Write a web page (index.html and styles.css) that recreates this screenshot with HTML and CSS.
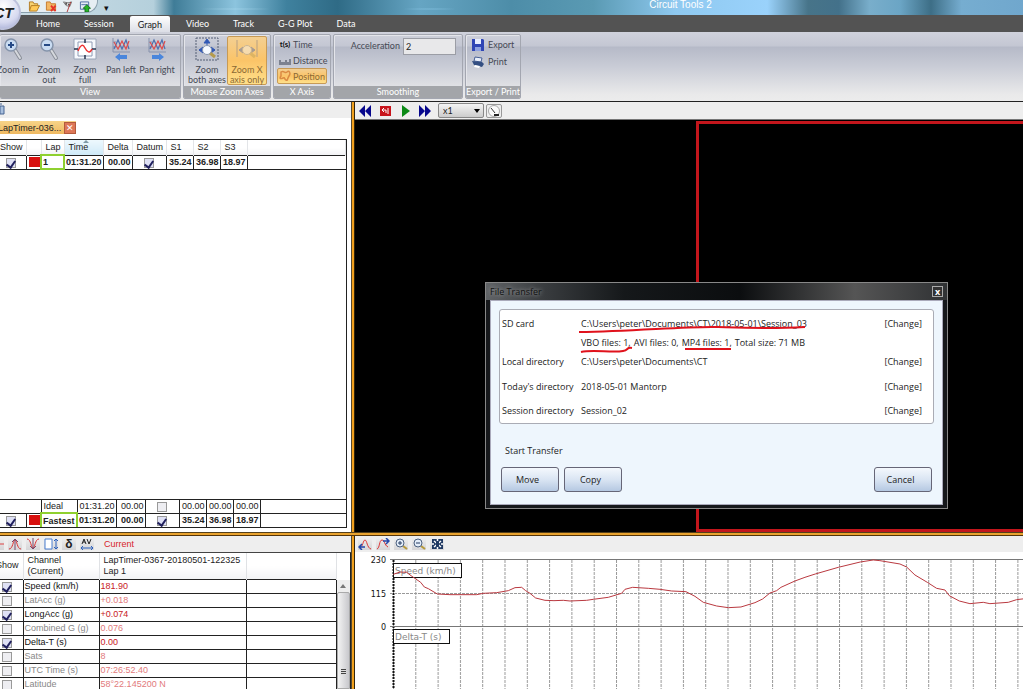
FILE: index.html
```html
<!DOCTYPE html>
<html lang="en">
<head>
    <meta charset="UTF-8">
    <meta name="viewport" content="width=device-width, initial-scale=1.0">
    <title>Circuit Tools 2</title>
    <link rel="stylesheet" href="styles.css">
</head>
<body>
    <!-- Shared icons -->
    <svg class="defs" aria-hidden="true">
        <symbol id="lens" viewBox="0 0 24 24">
            <path d="M14 13l5 8" stroke="#8a8f99" stroke-width="4" stroke-linecap="round"/>
            <path d="M14 13l5 8" stroke="#d5d8dd" stroke-width="2" stroke-linecap="round"/>
            <circle cx="10" cy="8" r="6" fill="#c9dcf2" stroke="#8493aa" stroke-width="1.5"/>
        </symbol>
        <symbol id="waves" viewBox="0 0 24 24">
            <path d="M4 1v14h17M4 5h3M4 10h3" fill="none" stroke="#8792ad"/>
            <path d="M5 12l4-9 4 9 4-9 3 9" fill="none" stroke="#4c6fae" stroke-width="1.2"/>
            <path d="M5 5l4 7 4-8 4 8 3-8" fill="none" stroke="#df4b4b" stroke-width="1.2"/>
        </symbol>
        <symbol id="axes" viewBox="0 0 24 24">
            <path d="M4 13h16M4 13l4-3v6zM20 13l-4-3v6z" fill="#3158b5" stroke="#3158b5"/>
            <path d="M15 16l5 4" stroke="#b59b4d" stroke-width="3"/>
            <circle cx="12" cy="13" r="4.5" fill="#f5f9ff" stroke="#8b98b0"/>
        </symbol>
    </svg>

    <header class="titlebar">
        <div class="quick">
            <button aria-label="Open"><svg viewBox="0 0 12 12"><path d="M1 10V1h4l1 2h4v2" fill="#f7d271" stroke="#b07a20"/><path d="M1 11l2-6h9l-3 6z" fill="#ffc956" stroke="#b07a20"/></svg></button>
            <button aria-label="Close file"><svg viewBox="0 0 12 12"><path d="M1 10V1h4l1 2h5v7z" fill="#f3b763" stroke="#c5772b"/><path d="M6 5l5 6M11 5l-5 6" stroke="#e5342a" stroke-width="2"/></svg></button>
            <button aria-label="Flag"><svg viewBox="0 0 12 12"><path d="M1 1l5 1 4-1-2 5-4-1z" fill="#eee" stroke="#777"/><path d="M3 2h2v2H3zM6 3h2v2H6z" fill="#555"/><path d="M9 1L5 12" stroke="#a33"/></svg></button>
            <button aria-label="Import"><svg viewBox="0 0 12 12"><path d="M1 1h9v8H1z" fill="#e4ebf5" stroke="#4968a0"/><path d="M2 4h7" stroke="#4968a0"/><path d="M8 4l4 4h-2v4H6V8H4z" fill="#26b526" stroke="#14701c"/></svg></button>
        </div>
        <button class="quick-more" aria-label="Customize">▾</button>
        <span class="app-title">Circuit Tools 2</span>
        <button class="orb">CT</button>
    </header>

    <nav class="tabs">
        <button>Home</button>
        <button>Session</button>
        <button class="active">Graph</button>
        <button>Video</button>
        <button>Track</button>
        <button>G-G Plot</button>
        <button>Data</button>
    </nav>

    <section class="ribbon">
        <div class="group view">
            <div class="tools">
                <button class="big"><svg viewBox="0 0 24 24"><use href="#lens"/><path d="M7 8h6M10 5v6" stroke="#254a86" stroke-width="2"/></svg>Zoom in</button>
                <button class="big"><svg viewBox="0 0 24 24"><use href="#lens"/><path d="M7 8h6" stroke="#254a86" stroke-width="2"/></svg>Zoom<br>out</button>
                <button class="big"><svg viewBox="0 0 24 24"><path d="M1 2h22v20H1z" fill="#f7f9fd" stroke="#9aa5b8"/><path d="M5 5h14v14H5z" fill="#fff" stroke="#8d9ab4"/><path d="M12 2v4M12 18v4M1 12h4M19 12h4" stroke="#26334c" stroke-width="1.500"/><path d="M5 14c3-7 5-7 7-3s5 6 7 1" fill="none" stroke="#e33" stroke-width="1.500"/></svg>Zoom<br>full</button>
                <button class="big"><svg viewBox="0 0 24 24"><use href="#waves"/><path d="M6 20l5-4v2h7v4h-7v2z" fill="#4a86dc"/></svg>Pan left</button>
                <button class="big"><svg viewBox="0 0 24 24"><use href="#waves"/><path d="M19 20l-5-4v2H7v4h7v2z" fill="#4a86dc"/></svg>Pan right</button>
            </div>
            <div class="caption">View</div>
        </div>
        <div class="group mouse">
            <div class="tools">
                <button class="big"><svg viewBox="0 0 24 24"><path d="M1 1h22v22H1z" fill="none" stroke="#555f75" stroke-dasharray="2 1"/><path d="M12 10V3M9 6l3-4 3 4z" fill="#3158b5" stroke="#3158b5"/><use href="#axes"/></svg>Zoom<br>both axes</button>
                <button class="big selected"><svg viewBox="0 0 24 24"><path d="M2 3v17M22 3v17" stroke="#b8a081"/><use href="#axes" opacity=".4"/></svg>Zoom X<br>axis only</button>
            </div>
            <div class="caption">Mouse Zoom Axes</div>
        </div>
        <div class="group xaxis">
            <div class="tools">
                <button class="small"><b>t(s)</b>Time</button>
                <button class="small"><svg viewBox="0 0 12 12"><path d="M1 6v5M3 8v3M5 8v3M7 6v5M9 8v3M11 5v6" stroke="#333a4c"/></svg>Distance</button>
                <button class="small selected"><svg viewBox="0 0 12 12"><path d="M2 2c3-2 4 2 6 0s4 1 2 4-1 5-3 4-1-3-3-2-4 1-2-2z" fill="none" stroke="#db8b43" stroke-width="1.500"/></svg>Position</button>
            </div>
            <div class="caption">X Axis</div>
        </div>
        <div class="group smoothing">
            <div class="tools">
                <label for="acceleration">Acceleration</label>
                <input type="text" id="acceleration" value="2">
            </div>
            <div class="caption">Smoothing</div>
        </div>
        <div class="group export">
            <div class="tools">
                <button class="small"><svg viewBox="0 0 12 12"><path d="M0 0h11l1 1v11H0z" fill="#3046b5"/><path d="M3 0h6v5H3z" fill="#e8eeff"/><path d="M3 8h6v4H3z" fill="#8fa2e0"/></svg>Export</button>
                <button class="small"><svg viewBox="0 0 12 12"><path d="M3 1l7 1-1 4-7-1z" fill="#eaf0fb" stroke="#486096"/><path d="M0 5l10 1 2 2-2 3-8-2z" fill="#344f82"/><path d="M3 9l5 1-1 2-5-1z" fill="#fff"/></svg>Print</button>
            </div>
            <div class="caption">Export / Print</div>
        </div>
    </section>

    <main class="workspace">
        <!-- Laps -->
        <section class="panel laps">
            <div class="laps-bar"><svg viewBox="0 0 6 12"><path d="M0 3h4v8H0z" fill="#a9c0de" stroke="#466492"/><path d="M0 1h2" stroke="#466492"/></svg></div>
            <div class="file-tabs">
                <div class="file-tab">LapTimer-036...<button aria-label="Close">✕</button></div>
            </div>
            <div class="lap-box">
                <table class="lap-table">
                    <colgroup><col class="w-show"><col class="w-color"><col class="w-lap"><col class="w-time"><col class="w-delta"><col class="w-datum"><col class="w-s"><col class="w-s"><col class="w-s"><col></colgroup>
                    <thead>
                        <tr><th>Show</th><th></th><th>Lap</th><th class="sorted">Time</th><th>Delta</th><th>Datum</th><th>S1</th><th>S2</th><th>S3</th><th></th></tr>
                    </thead>
                    <tbody>
                        <tr class="bold"><td class="check"><input type="checkbox" aria-label="Show lap 1" checked></td><td><i class="swatch"></i></td><td class="marked">1</td><td class="num">01:31.20</td><td class="num">00.00</td><td class="check"><input type="checkbox" aria-label="Datum lap 1" checked></td><td class="num">35.24</td><td class="num">36.98</td><td class="num">18.97</td><td></td></tr>
                    </tbody>
                </table>
                <table class="lap-table totals">
                    <colgroup><col class="w-show"><col class="w-color"><col class="w-name"><col class="w-time"><col class="w-delta"><col class="w-datum"><col class="w-s"><col class="w-s"><col class="w-s"><col></colgroup>
                    <tbody>
                        <tr><td class="blank"></td><td class="blank"></td><td>Ideal</td><td class="num">01:31.20</td><td class="num">00.00</td><td class="check"><input type="checkbox" aria-label="Datum ideal"></td><td class="num">00.00</td><td class="num">00.00</td><td class="num">00.00</td><td></td></tr>
                        <tr class="bold"><td class="check"><input type="checkbox" aria-label="Show fastest" checked></td><td><i class="swatch"></i></td><td class="marked">Fastest</td><td class="num">01:31.20</td><td class="num">00.00</td><td class="check"><input type="checkbox" aria-label="Datum fastest" checked></td><td class="num">35.24</td><td class="num">36.98</td><td class="num">18.97</td><td></td></tr>
                    </tbody>
                </table>
            </div>
        </section>

        <div class="split-v"></div>

        <!-- Video -->
        <section class="panel video">
            <div class="video-bar">
                <button aria-label="Rewind"><svg viewBox="0 0 14 12"><path d="M7 0v12L1 6zM13 0v12L7 6z" fill="#07078c"/></svg></button>
                <button aria-label="Restart lap"><svg viewBox="0 0 14 12"><path d="M2 1h11v10H2z" fill="#c8141b"/><path d="M4 5h4v3M6 3L4 5l2 2M10 3v6" fill="none" stroke="#fff"/></svg></button>
                <button aria-label="Play"><svg viewBox="0 0 14 12"><path d="M4 0l8 6-8 6z" fill="#0b8a16"/></svg></button>
                <button aria-label="Forward"><svg viewBox="0 0 14 12"><path d="M1 0v12l6-6zM7 0v12l6-6z" fill="#07078c"/></svg></button>
                <select aria-label="Speed"><option>x1</option></select>
                <button class="gauge" aria-label="Gauges"><svg viewBox="0 0 14 12"><circle cx="7" cy="6" r="5.500" fill="#fafafa" stroke="#aaa"/><path d="M4 3l4 5" stroke="#333"/><path d="M7 9h5v2H7z" fill="#222"/></svg></button>
            </div>
            <div class="screen"><div class="frame"></div></div>
        </section>

        <div class="split-h"></div>

        <!-- Channels -->
        <section class="panel channels">
            <div class="icon-bar">
                <button class="cut" aria-label="Line"><svg viewBox="0 0 14 12"><path d="M6 6h8" stroke="#d44"/></svg></button>
                <button aria-label="Maximum"><svg viewBox="0 0 14 12"><path d="M1 11c4 0 4-9 6-9s2 9 6 9" fill="none" stroke="#d33"/><path d="M7 12V2M4 4l3-3 3 3" fill="none" stroke="#754a6c"/></svg></button>
                <button aria-label="Minimum"><svg viewBox="0 0 14 12"><path d="M1 1c4 0 4 9 6 9s2-9 6-9" fill="none" stroke="#d33"/><path d="M7 0v10M4 8l3 3 3-3" fill="none" stroke="#754a6c"/></svg></button>
                <button aria-label="Range"><svg viewBox="0 0 14 12"><path d="M1 1h7v10H1z" fill="#fff" stroke="#4b7fd0"/><path d="M12 1v10M10 3l2-2 2 2M10 9l2 2 2-2" fill="none" stroke="#2b60bd"/></svg></button>
                <button class="delta" aria-label="Delta">δ</button>
                <button aria-label="Average"><svg viewBox="0 0 14 12"><path d="M2 6l2-5 2 5M7 1l2 5 2-5M3 4h2" fill="none" stroke="#222"/><path d="M1 10h12M3 8l-2 2 2 2M11 8l2 2-2 2" fill="none" stroke="#2b60bd"/></svg></button>
                <span class="current">Current</span>
            </div>
            <div class="channel-wrap">
                <table class="channel-table">
                    <colgroup><col class="c-show"><col class="c-name"><col class="c-value"><col></colgroup>
                    <thead><tr><th><span class="clip">Show</span></th><th>Channel<br>(Current)</th><th>LapTimer-0367-20180501-122325<br>Lap 1</th><th></th></tr></thead>
                    <tbody>
                        <tr><td><input type="checkbox" aria-label="Speed" checked></td><td>Speed (km/h)</td><td>181.90</td><td></td></tr>
                        <tr class="off"><td><input type="checkbox" aria-label="LatAcc"></td><td>LatAcc (g)</td><td>+0.018</td><td></td></tr>
                        <tr><td><input type="checkbox" aria-label="LongAcc" checked></td><td>LongAcc (g)</td><td>+0.074</td><td></td></tr>
                        <tr class="off"><td><input type="checkbox" aria-label="Combined G"></td><td>Combined G (g)</td><td>0.076</td><td></td></tr>
                        <tr><td><input type="checkbox" aria-label="Delta-T" checked></td><td>Delta-T (s)</td><td>0.00</td><td></td></tr>
                        <tr class="off"><td><input type="checkbox" aria-label="Sats"></td><td>Sats</td><td>8</td><td></td></tr>
                        <tr class="off"><td><input type="checkbox" aria-label="UTC Time"></td><td>UTC Time (s)</td><td>07:26:52.40</td><td></td></tr>
                        <tr class="off"><td><input type="checkbox" aria-label="Latitude"></td><td>Latitude</td><td>58°22.145200 N</td><td></td></tr>
                    </tbody>
                </table>
                <div class="scrollbar"><svg class="up" viewBox="0 0 12 12"><path d="M3 8l3-4 3 4z" fill="#777"/></svg><div class="thumb"><i></i></div></div>
            </div>
        </section>

        <!-- Graph -->
        <section class="panel graph">
            <div class="icon-bar">
                <button aria-label="Previous"><svg viewBox="0 0 14 12"><path d="M2 9c3 0 3-7 5-7s2 8 6 9" fill="none" stroke="#d33"/><path d="M1 9h6M4 6L1 9l3 3" fill="none" stroke="#2346a8" stroke-width="1.500"/></svg></button>
                <button aria-label="Next"><svg viewBox="0 0 14 12"><path d="M1 11c3-1 2-9 5-9s2 5 6 7" fill="none" stroke="#d33"/><path d="M7 3h6M10 0l3 3-3 3" fill="none" stroke="#2346a8" stroke-width="1.500"/></svg></button>
                <button aria-label="Zoom in"><svg viewBox="0 0 14 12"><path d="M9 8l4 3" stroke="#b79a3c" stroke-width="2"/><circle cx="6" cy="5" r="4" fill="#e3edf9" stroke="#4c607e"/><path d="M4 5h4M6 3v4" stroke="#243b61"/></svg></button>
                <button aria-label="Zoom out"><svg viewBox="0 0 14 12"><path d="M9 8l4 3" stroke="#b79a3c" stroke-width="2"/><circle cx="6" cy="5" r="4" fill="#e3edf9" stroke="#4c607e"/><path d="M4 5h4" stroke="#243b61"/></svg></button>
                <button aria-label="Fit"><svg viewBox="0 0 14 12"><path d="M2 1h11v10H2z" fill="#203a63"/><path d="M4 3l7 6M11 3L4 9M7.500 1v2M7.500 9v2M2 6h2M11 6h2" stroke="#fff" stroke-width="1.500"/><path d="M6 4h3v4H6z" fill="#203a63"/></svg></button>
            </div>
            <svg class="chart" viewBox="0 0 668 137" preserveAspectRatio="xMinYMin slice">
                <defs>
                    <pattern id="grid" x="38" y="8" width="22.300" height="4" patternUnits="userSpaceOnUse"><path d="M.5 0v3" stroke="#999"/></pattern>
                </defs>
                <rect x="38" y="8" width="640" height="140" fill="url(#grid)"/>
                <path d="M38.500 8v140" stroke="#111" stroke-width="2" stroke-dasharray="2 1"/>
                <path d="M35 7.500h640M35 74.500h640" stroke="#777"/>
                <path d="M35 41.500h640" stroke="#999" stroke-dasharray="3 1"/>
                <g class="axis"><text x="31" y="11">230</text><text x="31" y="45">115</text><text x="31" y="78">0</text></g>
                <g class="legend">
                    <rect x="38.500" y="11.500" width="68" height="14"/><text x="40" y="22">Speed (km/h)</text>
                    <rect x="38.500" y="77.500" width="56" height="14"/><text x="40" y="88">Delta-T (s)</text>
                </g>
                <polyline class="speed" transform="translate(-5 -27) scale(.3333)" points="130,148 150,141 170,142 183,152 212,172 223,186 235,191 262,207 300,209 380,209 400,205 440,203 475,197 495,188 515,187 527,197 540,205 557,219 585,226 612,227 640,226 660,228 710,226 730,223 775,217 815,205 825,193 848,187 895,190 930,193 965,198 1008,200 1035,214 1060,232 1100,243 1135,248 1173,246 1215,233 1238,222 1260,204 1280,197 1293,187 1335,168 1365,157 1396,147 1465,127 1531,111 1570,105 1590,107 1650,117 1670,126 1695,150 1732,172 1760,190 1785,195 1798,212 1828,228 1860,236 1900,232 1920,236 1975,232 2000,224 2025,221"/>
            </svg>
        </section>
    </main>

    <div class="dialog" role="dialog" aria-label="File Transfer">
        <div class="dialog-title"><span>File Transfer</span><button aria-label="Close">x</button></div>
        <div class="dialog-body">
            <div class="paths">
                <span>SD card</span><span>C:\Users\peter\Documents\CT\2018-05-01\Session_03</span><a href="#">[Change]</a>
                <span class="files"><span>VBO files: 1,</span><span>AVI files: 0,</span><span>MP4 files: 1,</span><span>Total size: 71 MB</span></span>
                <span>Local directory</span><span>C:\Users\peter\Documents\CT</span><a href="#">[Change]</a>
                <span>Today's directory</span><span>2018-05-01 Mantorp</span><a href="#">[Change]</a>
                <span>Session directory</span><span>Session_02</span><a href="#">[Change]</a>
                <svg class="marks" viewBox="0 0 232 36"><path d="M1 14C60 13 110 8 140 9s50 2 87 0M3 34c12-3 30 1 42-1 6-1 3-4 9-3M107 31h46"/></svg>
            </div>
            <p>Start Transfer</p>
            <div class="actions"><button>Move</button><button>Copy</button><button class="cancel">Cancel</button></div>
        </div>
    </div>
</body>
</html>
```
FILE: styles.css
```css
* {
    box-sizing: border-box;
}
body {
    margin: 0;
    height: 100vh;
    display: flex;
    flex-direction: column;
    overflow: hidden;
    position: relative;
    background-color: #eee;
    color: #222;
    font-family: "Liberation Sans", Arial, sans-serif;
    font-size: 9px;
}
button, input, select {
    font: inherit;
    color: inherit;
    margin: 0;
    padding: 0;
}
button {
    border: none;
    background: none;
}
.defs {
    position: absolute;
    width: 0;
    height: 0;
}

/* Title bar */
.titlebar {
    position: relative;
    display: flex;
    height: 15px;
    flex: none;
    background:
        radial-gradient(ellipse at 42% 60%, #9bd8f8 0, transparent 5%),
        radial-gradient(ellipse at 23% 60%, #b5e2f6 0, transparent 5%),
        linear-gradient(90deg, #cfe0e8 0, #b5d0dc 15%, #3f7c97 17%, #8cc4de 23%, #3f819e 28%, #2f6b86 33%, #66a5c3 41%, #4d8da8 50%, #5a9ab3 58%, #8fc9f0 66%, #9ad2fb 75%, #477489 79%, #43718a 82%, #79aecb 85%, #6ba5c5 88%, #3d6e86 91%, #76add0 94%, #70a7cd 100%);
}
.quick {
    display: flex;
    gap: 5px;
    width: 98px;
    padding-left: 28px;
    height: 13px;
    background-color: #e6eef3;
    border-right: 1px solid #8aa0ad;
    border-bottom: 1px solid #8aa0ad;
    border-radius: 0 0 12px 0;
}
.quick svg {
    display: block;
    width: 12px;
    height: 11px;
}
.quick-more {
    width: 16px;
    line-height: 8px;
    color: #111;
}
.app-title {
    position: absolute;
    left: 0;
    right: 0;
    padding-left: 338px;
    top: 0;
    text-align: center;
    font-size: 10px;
    line-height: 10px;
    color: #fff;
}
.orb {
    position: absolute;
    left: -14px;
    top: -5px;
    width: 35px;
    height: 35px;
    border-radius: 50%;
    border: 2px solid #bcc1dc;
    background: radial-gradient(circle at 50% 30%, #fff, #d7daf0 60%, #9ca4cf);
    font-size: 15px;
    font-weight: bold;
    font-style: italic;
    color: #222;
    z-index: 2;
}

/* Ribbon */
.tabs {
    display: flex;
    flex: none;
    height: 17px;
    padding-left: 24px;
    background-color: #535353;
    font-family: Lato, "Open Sans", sans-serif;
}
.tabs button {
    margin: 0 4px;
    padding: 0 8px;
    color: #fff;
    line-height: 17px;
}
.tabs .active {
    margin-top: 1px;
    line-height: 15px;
    color: #222;
    background: linear-gradient(#fff, #dcdee6);
    border-radius: 2px 2px 0 0;
}
.ribbon {
    display: flex;
    gap: 2px;
    flex: none;
    height: 70px;
    padding: 2px 0;
    background: linear-gradient(#d0d2dc 0, #c4c7d3 20%, #b6bac8 22%, #c9ccd6 50%, #e9e9ea 90%, #ececec 100%);
    border-bottom: 1px solid #222;
    font-family: Lato, "Open Sans", sans-serif;
    color: #464a55;
}
.group {
    display: flex;
    flex-direction: column;
    border: 1px solid #a3a6b0;
    border-radius: 2px;
    overflow: hidden;
    box-shadow: inset 1px 1px 0 #e4e5ea;
}
.tools {
    flex: 1;
    min-height: 0;
    display: flex;
}
.caption {
    flex: none;
    height: 12px;
    line-height: 11px;
    text-align: center;
    color: #fff;
    background-color: #a3a5a9;
    white-space: nowrap;
}
.view {
    width: 181px;
    border-left: none;
}
.view .tools {
    margin-left: -5px;
}
.mouse {
    width: 88px;
}
.xaxis {
    width: 58px;
}
.smoothing {
    width: 130px;
}
.export {
    width: 56px;
}
.big {
    display: flex;
    flex-direction: column;
    align-items: center;
    width: 36px;
    flex: none;
    padding-top: 2px;
    line-height: 10px;
    white-space: nowrap;
}
.big svg {
    width: 24px;
    height: 24px;
    margin-bottom: 4px;
    flex: none;
}
.mouse .big {
    width: 40px;
    margin: 1px 0;
    border: 1px solid transparent;
    padding-top: 0;
}
.mouse .tools {
    padding-left: 3px;
}
.mouse .selected, .small.selected {
    background: linear-gradient(#f3cf92, #fbc468 50%, #ffe08a);
    border: 1px solid #c79a55;
    border-radius: 2px;
    color: #8c6a35;
}
.xaxis .tools, .export .tools {
    flex-direction: column;
    padding: 1px 3px;
}
.small {
    display: flex;
    align-items: center;
    gap: 4px;
    height: 17px;
    flex: none;
    padding-left: 2px;
    border: 1px solid transparent;
    white-space: nowrap;
}
.xaxis .small {
    gap: 2px;
    padding-left: 1px;
    height: 16px;
}
.small svg {
    width: 12px;
    height: 12px;
    flex: none;
}
.small b {
    width: 12px;
    font-size: 8px;
    color: #111;
}
.smoothing .tools {
    align-items: flex-start;
    justify-content: flex-end;
    gap: 3px;
    padding: 3px 6px;
    line-height: 16px;
}
.smoothing input {
    width: 53px;
    height: 17px;
    padding-left: 2px;
    border: 1px solid #9b9da5;
    background-color: #e8e8ea;
    color: #222;
}

/* Workspace */
.workspace {
    flex: 1;
    min-height: 0;
    display: grid;
    grid-template-columns: 351px 4px minmax(0, 1fr);
    grid-template-rows: minmax(0, 430fr) 4px minmax(0, 153fr);
    background-color: #fff;
}
.panel {
    display: flex;
    flex-direction: column;
    min-width: 0;
    min-height: 0;
    overflow: hidden;
}
.laps {
    grid-area: 1 / 1;
}
.video {
    grid-area: 1 / 3;
}
.channels {
    grid-area: 3 / 1;
}
.graph {
    grid-area: 3 / 3;
}
.split-v {
    grid-area: 1 / 2 / 4 / 3;
    background-color: #f0a01e;
    border-left: 1px solid #554a33;
    border-right: 1px solid #33240a;
}
.split-h {
    grid-area: 2 / 1 / 3 / 4;
    background-color: #e9a32f;
    border-top: 1px solid #54401a;
    border-bottom: 1px solid #54350a;
}
.laps-bar {
    height: 16px;
    background-color: #eee;
}
.laps-bar svg {
    display: block;
    width: 6px;
    height: 14px;
}
.file-tabs {
    display: flex;
    height: 21px;
    padding: 3px 0 5px;
}
.file-tab {
    display: flex;
    align-items: center;
    gap: 3px;
    margin-left: -2px;
    background: linear-gradient(#f7d488, #efb961);
}
.file-tab button {
    width: 12px;
    height: 12px;
    line-height: 10px;
    border: 1px solid #b35a3c;
    background-color: #dd7757;
    color: #fff;
}
.lap-box {
    flex: 1;
    display: flex;
    flex-direction: column;
    justify-content: space-between;
    margin: 0 4px 4px 0;
    border: 1px solid #222;
    border-left: none;
}
table {
    border-collapse: collapse;
    table-layout: fixed;
    width: 100%;
}
th {
    font-weight: normal;
    text-align: left;
    background: linear-gradient(#fff 50%, #f2f3f5);
}
th, td {
    padding: 0;
    white-space: nowrap;
}
.lap-table th {
    height: 15px;
    padding-left: 4px;
    border-right: 1px solid #e3e5e8;
}
.lap-table th:first-child {
    padding-left: 0;
}
.lap-table .sorted {
    position: relative;
    background: linear-gradient(#eef8fd, #cfeaf8);
}
.sorted::before {
    content: "";
    position: absolute;
    top: 0;
    left: 18px;
    border: 3px solid transparent;
    border-top: none;
    border-bottom-color: #7f9aa8;
}
.lap-table td {
    height: 14px;
    padding-left: 2px;
    border: 1px solid #222;
    line-height: 12px;
}
.lap-table td:first-child {
    border-left: none;
}
.lap-table td:last-child {
    border-right: none;
}
.lap-table .num {
    padding: 0 1px 0 0;
    text-align: right;
}
.lap-table .check {
    padding: 0;
    text-align: center;
}
.lap-table .check:first-child {
    padding-right: 4px;
}
.lap-table .blank {
    border-left: none;
}
.lap-table .blank:first-child {
    border-right: none;
}
.lap-table .marked {
    border: 2px solid #8fd02f;
    padding-left: 1px;
}
.totals tr:last-child td {
    border-bottom: none;
}
.bold {
    font-weight: bold;
}
.w-show {
    width: 26px;
}
.w-color {
    width: 15px;
}
.w-lap {
    width: 23px;
}
.w-name {
    width: 36px;
}
.w-time {
    width: 39px;
}
.w-delta {
    width: 29px;
}
.w-datum {
    width: 34px;
}
.w-s {
    width: 27px;
}
.swatch {
    display: block;
    width: 11px;
    height: 10px;
    background-color: #d8100f;
}
input[type="checkbox"] {
    appearance: none;
    display: inline-grid;
    place-items: center;
    width: 10px;
    height: 10px;
    vertical-align: middle;
    border: 1px solid #999;
    background-color: #eeeef2;
}
input[type="checkbox"]:checked {
    background-color: #dfe1f5;
}
input[type="checkbox"]:checked::after {
    content: "";
    width: 4px;
    height: 7px;
    margin-bottom: 2px;
    border: solid #20205e;
    border-width: 0 2px 2px 0;
    transform: rotate(35deg);
}

/* Video */
.video-bar {
    display: flex;
    align-items: center;
    gap: 6px;
    height: 18px;
    padding-left: 3px;
    background-color: #eee;
    border-bottom: 1px solid #777;
    flex: none;
}
.video-bar svg, .icon-bar svg {
    display: block;
    width: 14px;
    height: 12px;
}
.video-bar select {
    appearance: none;
    width: 46px;
    height: 15px;
    padding-left: 4px;
    border: 1px solid #888;
    border-radius: 2px;
    background:
        url("data:image/svg+xml,%3Csvg xmlns='http://www.w3.org/2000/svg' viewBox='0 0 6 4'%3E%3Cpath d='M0 0h6L3 4z'/%3E%3C/svg%3E") right 3px center / 6px 4px no-repeat,
        linear-gradient(#f4f4f4, #ccc);
    font-family: Lato, "Open Sans", sans-serif;
}
.video-bar .gauge {
    margin-left: -4px;
    border: 1px solid #999;
    border-radius: 2px;
}
.screen {
    flex: 1;
    padding-left: 51%;
    padding-top: 1px;
    background-color: #000;
}
.frame {
    height: 100%;
    border: 3px solid #c3161c;
    border-right: none;
}

/* Channels */
.icon-bar {
    display: flex;
    align-items: center;
    gap: 4px;
    height: 16px;
    padding-left: 3px;
    background-color: #eee;
    flex: none;
}
.icon-bar button {
    background: linear-gradient(#eee, #d5d5d7);
}
.channels .icon-bar {
    height: 17px;
    padding-left: 0;
    border-bottom: 1px solid #444;
}
.channels .cut {
    margin-left: -10px;
}
.icon-bar .delta {
    width: 14px;
    font-size: 12px;
    line-height: 12px;
    font-weight: bold;
}
.current {
    margin-left: 6px;
    color: #d8232a;
}
.channel-wrap {
    flex: 1;
    min-height: 0;
    display: flex;
    align-items: stretch;
    border-right: 1px solid #222;
}
.channel-table {
    flex: 1;
    align-self: flex-start;
}
.channel-table th {
    height: 26px;
    padding-left: 4px;
    line-height: 11px;
    border-right: 1px solid #e0e2e5;
}
.channel-table th:first-child {
    padding: 0;
}
.clip {
    margin-left: -4px;
}
.channel-table td {
    height: 14px;
    padding-left: 2px;
    line-height: 12px;
    border: 1px solid #222;
    border-left: none;
    color: #111;
}
.channel-table td:nth-child(2) {
    padding-left: 1px;
}
.channel-table td:nth-child(3) {
    padding-left: 1px;
    color: #c8191e;
}
.channel-table .off td {
    color: #888;
}
.channel-table .off td:nth-child(3) {
    color: #e27a7c;
}
.c-show {
    width: 23px;
}
.c-name {
    width: 76px;
}
.c-value {
    width: 147px;
}
.scrollbar {
    width: 13px;
    margin-top: 27px;
    display: flex;
    flex-direction: column;
    background-color: #eee;
}
.scrollbar .up {
    width: 12px;
    height: 12px;
}
.thumb {
    flex: 1;
    display: flex;
    align-items: center;
    justify-content: center;
    padding-top: 62px;
    border: 1px solid #aaa;
    border-radius: 2px 2px 0 0;
    background: linear-gradient(90deg, #f3f3f3, #c8c8cc);
}
.thumb i {
    width: 5px;
    height: 6px;
    background: repeating-linear-gradient(#444 0 1px, #ddd 1px 2px);
}

/* Graph */
.chart {
    flex: 1;
    min-height: 0;
    width: 100%;
    background-color: #fff;
    font-family: "DejaVu Sans", Verdana, sans-serif;
}
.axis {
    font-size: 8px;
    text-anchor: end;
    fill: #111;
}
.legend {
    font-size: 9px;
    fill: #888;
}
.legend rect {
    fill: #fff;
    stroke: #111;
}
.speed {
    fill: none;
    stroke: #b9383f;
    stroke-width: 3;
}

/* File transfer dialog */
.dialog {
    position: absolute;
    left: 485px;
    top: 282px;
    width: 463px;
    padding: 0 4px 3px;
    border: 1px solid #888;
    background: #16181b;
    color: #222;
    font-family: "Open Sans", "Noto Sans", sans-serif;
}
.dialog-title {
    display: flex;
    align-items: center;
    justify-content: space-between;
    height: 17px;
    margin: 0 -4px;
    padding: 0 4px;
    background: linear-gradient(90deg, #606366, #3a3d40 12%, #15181a 30%, #0b0d0f 55%, #555 80%, #303234);
}
.dialog-title span {
    color: #111;
    text-shadow: 0 0 4px #bbb;
}
.dialog-title button {
    width: 11px;
    height: 11px;
    line-height: 8px;
    border: 1px solid #aaa;
    background-color: #333;
    color: #fff;
    font-weight: bold;
}
.dialog-body {
    padding: 8px;
    border: 1px solid #aab;
    background-color: #eef6fd;
}
.paths {
    position: relative;
    display: grid;
    grid-template-columns: 79px 1fr auto;
    grid-template-rows: 24px 14px 25px 24px 25px;
    align-items: center;
    padding: 1px 11px 0 2px;
    border: 1px solid #aaacb5;
    border-radius: 3px;
    background-color: #fff;
    white-space: nowrap;
}
.paths a {
    color: #222;
    text-decoration: none;
}
.files {
    grid-column: 2 / 4;
    display: flex;
    gap: 3px;
}
.marks {
    position: absolute;
    left: 78px;
    top: 8px;
    width: 232px;
    height: 36px;
    fill: none;
    stroke: #e0121c;
    stroke-width: 2;
}
.dialog-body p {
    margin: 20px 0 10px 6px;
    line-height: 13px;
}
.actions {
    display: flex;
    gap: 5px;
    padding: 0 2px 4px;
}
.actions button {
    width: 58px;
    height: 25px;
    border: 1px solid #667;
    border-radius: 3px;
    background: linear-gradient(#f4f8fd, #dae5f3 50%, #b5c8e2);
    padding-right: 5px;
}
.actions .cancel {
    margin-left: auto;
}
```
